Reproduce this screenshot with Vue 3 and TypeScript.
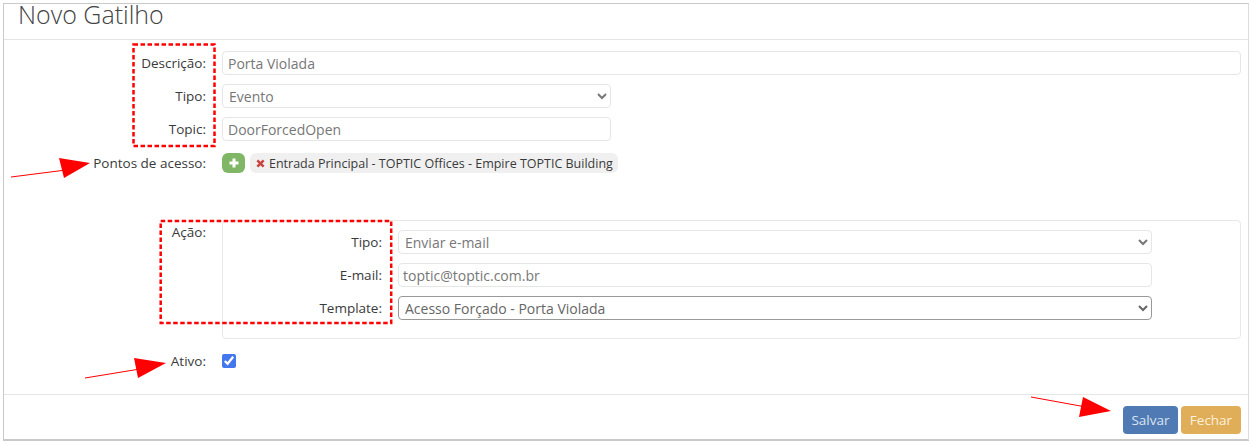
<template>
  <div class="page">
    <div class="modal">
      <header class="modal-head">
        <h4>Novo Gatilho</h4>
      </header>

      <div class="modal-body">
        <div class="row">
          <label>Descrição:</label>
          <input class="field" type="text" value="Porta Violada" />
        </div>
        <div class="row">
          <label>Tipo:</label>
          <select class="field narrow">
            <option>Evento</option>
          </select>
        </div>
        <div class="row">
          <label>Topic:</label>
          <input class="field narrow" type="text" value="DoorForcedOpen" />
        </div>
        <div class="row points">
          <label>Pontos de acesso:</label>
          <button type="button" class="add-btn" aria-label="add">
            <svg width="12" height="12" viewBox="0 0 12 12">
              <path d="M6 1.5v9M1.5 6h9" stroke="#fff" stroke-width="3" fill="none" />
            </svg>
          </button>
          <span class="chip">
            <svg width="9" height="9" viewBox="0 0 10 10">
              <path d="M1.5 1.5l7 7M8.5 1.5l-7 7" stroke="#c9443f" stroke-width="2.8" fill="none" />
            </svg>
            Entrada Principal - TOPTIC Offices - Empire TOPTIC Building
          </span>
        </div>

        <div class="row action">
          <label>Ação:</label>
          <div class="panel">
            <div class="row">
              <label>Tipo:</label>
              <select class="field">
                <option>Enviar e-mail</option>
              </select>
            </div>
            <div class="row">
              <label>E-mail:</label>
              <input class="field" type="text" value="toptic@toptic.com.br" />
            </div>
            <div class="row">
              <label>Template:</label>
              <select class="field strong">
                <option>Acesso Forçado - Porta Violada</option>
              </select>
            </div>
          </div>
        </div>

        <div class="row active">
          <label>Ativo:</label>
          <input class="check" type="checkbox" checked />
        </div>
      </div>

      <footer class="modal-foot">
        <button type="button" class="btn save">Salvar</button>
        <button type="button" class="btn close">Fechar</button>
      </footer>
    </div>

    <!-- anotacoes por cima do print -->
    <svg class="arrows" width="1252" height="445" viewBox="0 0 1252 445">
      <rect x="133.5" y="44.5" width="81" height="101.5" class="dash" />
      <rect x="160.7" y="221" width="230.5" height="102" class="dash" />
      <g v-for="a in arrows" :key="a.tip">
        <path :d="a.line" stroke="#f00" stroke-width="1" fill="none" />
        <path :d="a.head" fill="#f00" />
      </g>
    </svg>
  </div>
</template>

<script setup lang="ts">
const arrows = [
  { tip: "points", line: "M11 177L66 170", head: "M59 158L90 163L64 178Z" },
  { tip: "active", line: "M85 378L140 369", head: "M134 358L166 363L138 378Z" },
  { tip: "save", line: "M1031 397L1086 407", head: "M1083 397L1111 411L1079 417Z" },
];
</script>

<style>
html,
body {
  margin: 0;
  background: #fff;
}
</style>

<style scoped>
.page {
  position: relative;
  width: 1252px;
  height: 445px;
  overflow: hidden;
  font-family: "Open Sans", "Noto Sans", sans-serif;
  font-size: 13.5px;
  color: #3a3a3a;
  background: #fff;
}

.modal {
  box-sizing: border-box;
  width: 1246px;
  height: 438px;
  margin: 3px 0 0 3px;
  border: 1px solid #c9c9c9;
  border-bottom-width: 2px;
  border-right-color: #ddd;
  display: flex;
  flex-direction: column;
}

.modal-head {
  height: 35px;
  padding-left: 14px;
  border-bottom: 1px solid #e5e5e5;
}

.modal-head h4 {
  margin: 0;
  font-size: 25px;
  font-weight: 300;
  line-height: 21px;
  color: #444;
}

.modal-body {
  flex: 1;
  padding-top: 11px;
  padding-right: 7px;
}

.row {
  display: flex;
  align-items: center;
  gap: 16px;
  margin-bottom: 9px;
}

.row > label {
  flex: none;
  width: 202px;
  text-align: right;
}

.field {
  box-sizing: border-box;
  flex: 1;
  min-width: 0;
  height: 24px;
  margin: 0;
  padding: 0 5px;
  border: 1px solid #e6e6e6;
  border-radius: 4px;
  background: #fff;
  font: inherit;
  font-size: 14px;
  color: #777;
  outline: none;
}

select.field {
  padding-left: 2px;
}

.narrow {
  flex: none;
  width: 389px;
}

.strong {
  border-color: #999;
  color: #666;
}

.points {
  gap: 0;
  height: 20px;
  margin-top: 12px;
  margin-bottom: 0;
}

.points > label {
  margin-right: 16px;
}

.add-btn {
  box-sizing: border-box;
  display: flex;
  align-items: center;
  justify-content: center;
  width: 23px;
  height: 20px;
  padding: 0;
  border: none;
  border-radius: 6px;
  background: #7fb766;
}

.chip {
  display: inline-flex;
  align-items: center;
  gap: 4px;
  height: 20px;
  margin-left: 5px;
  padding: 0 5px 0 6px;
  border-radius: 6px;
  background: #f0f0f0;
  font-size: 12.5px;
  color: #3a3a3a;
}

.action {
  align-items: flex-start;
  margin-top: 47px;
  margin-bottom: 0;
}

.action > label {
  padding-top: 3px;
}

.panel {
  box-sizing: border-box;
  flex: 1;
  height: 119px;
  padding: 9px 88px 0 0;
  border: 1px solid #e8e8e8;
  border-radius: 4px;
}

.panel .row {
  gap: 16px;
  margin-bottom: 9px;
}

.panel .row > label {
  width: 159px;
}

.panel input.field {
  padding-left: 4px;
}

.active {
  margin-top: 13px;
  margin-bottom: 0;
  height: 18px;
}

.check {
  width: 14px;
  height: 14px;
  margin: 0;
  accent-color: #4477ee;
}

.modal-foot {
  display: flex;
  justify-content: flex-end;
  gap: 3px;
  height: 45px;
  padding: 11px 7px 0 0;
  box-sizing: border-box;
  border-top: 1px solid #e5e5e5;
}

.btn {
  height: 28px;
  border: none;
  border-radius: 4px;
  font: inherit;
  font-size: 13.5px;
  color: #dbe4f0;
}

.save {
  width: 55px;
  background: #4f7ab3;
}

.close {
  width: 60px;
  background: #e0ad58;
  color: #fbf1dd;
}

.arrows {
  position: absolute;
  left: 0;
  top: 0;
  pointer-events: none;
}

.dash {
  fill: none;
  stroke: #f00;
  stroke-width: 2.5;
  stroke-dasharray: 4.5 2.5;
}
</style>
